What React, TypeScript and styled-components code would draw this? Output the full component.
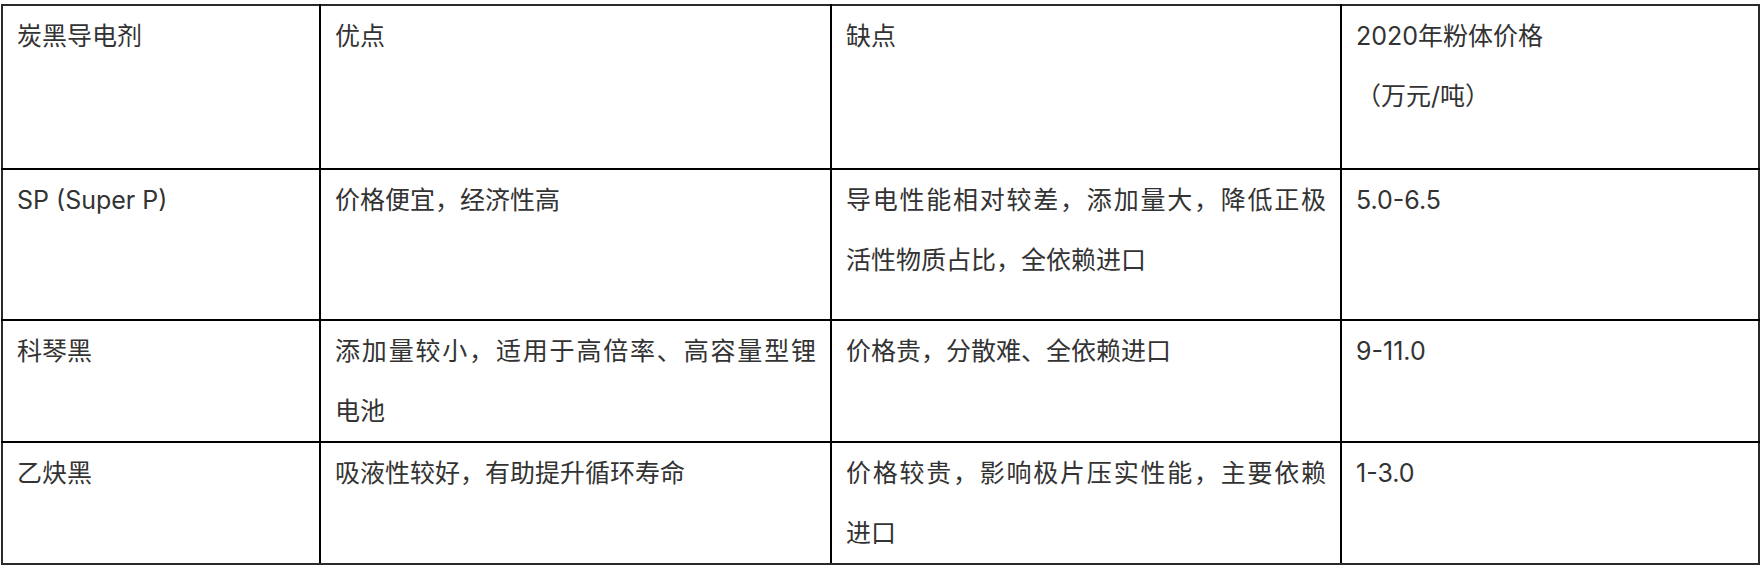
import React from "react";
import styled, { createGlobalStyle } from "styled-components";

type Cell = { lines: string[]; wrapped?: boolean };
type Row = { height?: number; cells: Cell[] };

const GlobalStyle = createGlobalStyle`
  html, body {
    margin: 0;
    padding: 0;
    background: #fff;
  }
`;

const Page = styled.div`
  padding: 4px 2px 0 1px;
`;

const Table = styled.table`
  border-collapse: collapse;
  table-layout: fixed;
  width: 1757px;
  font-family: Inter, "Noto Sans CJK SC", sans-serif;
  font-size: 25px;
  line-height: 60px;
  color: #333;
`;

const Col = styled.col<{ $w: number }>`
  width: ${(p) => p.$w}px;
`;

const Tr = styled.tr<{ $h?: number }>`
  height: ${(p) => (p.$h ? `${p.$h}px` : "auto")};

  &:first-child td {
    border-top-color: #2a2a2a;
  }

  &:last-child td {
    border-bottom-color: #2a2a2a;
  }
`;

const Td = styled.td`
  border: 2px solid #000;
  padding: 0 14px;
  vertical-align: top;

  &:first-child {
    border-left-color: #2a2a2a;
  }

  &:last-child {
    border-right-color: #2a2a2a;
  }
`;

const Line = styled.div<{ $justify?: boolean }>`
  white-space: nowrap;
  text-align: ${(p) => (p.$justify ? "justify" : "left")};
  text-align-last: ${(p) => (p.$justify ? "justify" : "auto")};
`;

const widths = [318, 511, 510, 418];

const rows: Row[] = [
  {
    height: 164,
    cells: [
      { lines: ["炭黑导电剂"] },
      { lines: ["优点"] },
      { lines: ["缺点"] },
      { lines: ["2020年粉体价格", "（万元/吨）"] },
    ],
  },
  {
    height: 151,
    cells: [
      { lines: ["SP (Super P)"] },
      { lines: ["价格便宜，经济性高"] },
      { lines: ["导电性能相对较差，添加量大，降低正极", "活性物质占比，全依赖进口"], wrapped: true },
      { lines: ["5.0-6.5"] },
    ],
  },
  {
    cells: [
      { lines: ["科琴黑"] },
      { lines: ["添加量较小，适用于高倍率、高容量型锂", "电池"], wrapped: true },
      { lines: ["价格贵，分散难、全依赖进口"] },
      { lines: ["9-11.0"] },
    ],
  },
  {
    cells: [
      { lines: ["乙炔黑"] },
      { lines: ["吸液性较好，有助提升循环寿命"] },
      { lines: ["价格较贵，影响极片压实性能，主要依赖", "进口"], wrapped: true },
      { lines: ["1-3.0"] },
    ],
  },
];

const App: React.FC = () => {
  return (
    <Page>
      <GlobalStyle />
      <Table>
        <colgroup>
          {widths.map((w, i) => (
            <Col key={i} $w={w} />
          ))}
        </colgroup>
        <tbody>
          {rows.map((row, r) => (
            <Tr key={r} $h={row.height}>
              {row.cells.map((cell, c) => (
                <Td key={c}>
                  {cell.lines.map((text, l) => (
                    <Line
                      key={l}
                      $justify={cell.wrapped && l < cell.lines.length - 1}
                    >
                      {text}
                    </Line>
                  ))}
                </Td>
              ))}
            </Tr>
          ))}
        </tbody>
      </Table>
    </Page>
  );
};

export default App;
